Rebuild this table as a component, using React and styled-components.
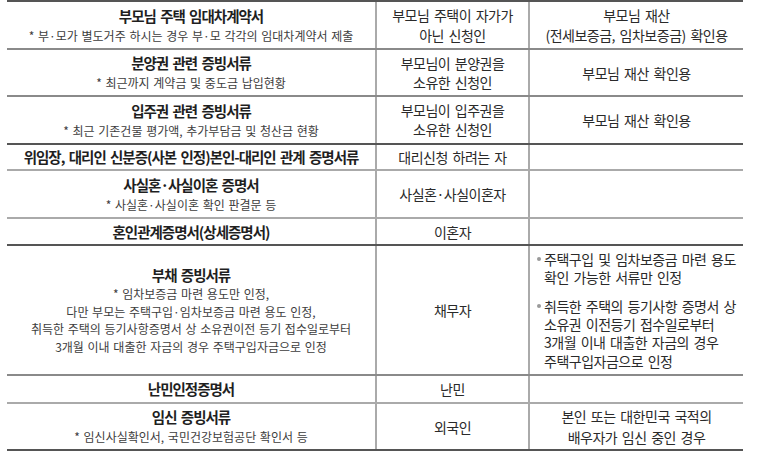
import React from "react";
import styled, { createGlobalStyle } from "styled-components";

const GlobalStyle = createGlobalStyle`
  html, body { margin: 0; padding: 0; background: #ffffff; }
  body {
    font-family: "Noto Sans CJK KR", "Noto Sans", sans-serif;
    color: #262626;
  }
`;

const LINE = { dark: "#555555", mid: "#8a8a8a", light: "#aaaaaa" };

const Table = styled.div`
  display: flex;
  flex-direction: column;
  margin-left: 7px;
  width: 736px;
`;

const Row = styled.div`
  display: grid;
  grid-template-columns: 368px 153px 215px;
  box-sizing: border-box;
  height: ${(p) => p.$h + (p.$last ? 2 : 0)}px;
  border-top: 2px solid ${(p) => LINE[p.$line]};
  border-bottom: ${(p) => (p.$last ? `2px solid ${LINE.dark}` : "none")};
`;

const Cell = styled.div`
  box-sizing: border-box;
  display: flex;
  flex-direction: column;
  align-items: ${(p) => (p.$left ? "flex-start" : "center")};
  justify-content: center;
  text-align: ${(p) => (p.$left ? "left" : "center")};
  border-left: ${(p) => (p.$divider ? `2px solid ${LINE.light}` : "none")};
  padding: ${(p) => (p.$left ? "0 0 0 7px" : "0")};
  white-space: nowrap;
  overflow: hidden;
`;

const Title = styled.div`
  font-size: 14.5px;
  font-weight: 700;
  letter-spacing: -1px;
  word-spacing: 2px;
  line-height: 20px;
  color: #1f1f1f;
`;

const Note = styled.div`
  font-size: 12px;
  letter-spacing: 0;
  word-spacing: 1px;
  line-height: ${(p) => (p.$dense ? "17.5px" : "19px")};
  color: #3d3d3d;
`;

const Body = styled.div`
  font-size: 14px;
  letter-spacing: -0.5px;
  word-spacing: 2px;
  line-height: ${(p) => p.$lh || 20}px;
  color: #2a2a2a;
`;

const BulletList = styled.div`
  display: flex;
  flex-direction: column;
  gap: 10px;
`;

const Bullet = styled.div`
  position: relative;
  padding-left: 7px;
  font-size: 14px;
  letter-spacing: -0.5px;
  word-spacing: 2px;
  line-height: 18.4px;
  color: #2a2a2a;
  &::before {
    content: "";
    position: absolute;
    left: 0;
    top: 7px;
    width: 4px;
    height: 4px;
    border-radius: 50%;
    background: #9a9a9a;
  }
`;

const rows = [
  {
    h: 48, line: "dark",
    doc: { title: "부모님 주택 임대차계약서", notes: ["* 부·모가 별도거주 하시는 경우 부·모 각각의 임대차계약서 제출"] },
    who: ["부모님 주택이 자가가", "아닌 신청인"],
    memo: ["부모님 재산", "(전세보증금, 임차보증금) 확인용"],
  },
  {
    h: 47, line: "mid",
    doc: { title: "분양권 관련 증빙서류", notes: ["* 최근까지 계약금 및 중도금 납입현황"] },
    who: ["부모님이 분양권을", "소유한 신청인"], whoLh: 19,
    memo: ["부모님 재산 확인용"],
  },
  {
    h: 48, line: "mid",
    doc: { title: "입주권 관련 증빙서류", notes: ["* 최근 기존건물 평가액, 추가부담금 및 청산금 현황"] },
    who: ["부모님이 입주권을", "소유한 신청인"], whoLh: 19,
    memo: ["부모님 재산 확인용"],
  },
  {
    h: 26, line: "dark",
    doc: { title: "위임장, 대리인 신분증(사본 인정)본인-대리인 관계 증명서류", notes: [] },
    who: ["대리신청 하려는 자"],
    memo: [],
  },
  {
    h: 48, line: "light",
    doc: { title: "사실혼·사실이혼 증명서", notes: ["* 사실혼·사실이혼 확인 판결문 등"] },
    who: ["사실혼·사실이혼자"],
    memo: [],
  },
  {
    h: 27, line: "light",
    doc: { title: "혼인관계증명서(상세증명서)", notes: [] },
    who: ["이혼자"],
    memo: [],
  },
  {
    h: 130, line: "dark", dense: true,
    doc: {
      title: "부채 증빙서류",
      notes: [
        "* 임차보증금 마련 용도만 인정,",
        "다만 부모는 주택구입·임차보증금 마련 용도 인정,",
        "취득한 주택의 등기사항증명서 상 소유권이전 등기 접수일로부터",
        "3개월 이내 대출한 자금의 경우 주택구입자금으로 인정",
      ],
    },
    who: ["채무자"],
    bullets: [
      ["주택구입 및 임차보증금 마련 용도", "확인 가능한 서류만 인정"],
      ["취득한 주택의 등기사항 증명서 상", "소유권 이전등기 접수일로부터", "3개월 이내 대출한 자금의 경우", "주택구입자금으로 인정"],
    ],
  },
  {
    h: 28, line: "mid",
    doc: { title: "난민인정증명서", notes: [] },
    who: ["난민"],
    memo: [],
  },
  {
    h: 47, line: "light", last: true,
    doc: { title: "임신 증빙서류", notes: ["* 임신사실확인서, 국민건강보험공단 확인서 등"] },
    who: ["외국인"],
    memo: ["본인 또는 대한민국 국적의", "배우자가 임신 중인 경우"], memoLh: 21,
  },
];

function Lines({ items, lh }) {
  return items.map((t, i) => (
    <Body key={i} $lh={lh}>
      {t}
    </Body>
  ));
}

export default function App() {
  return (
    <>
      <GlobalStyle />
      <Table>
        {rows.map((r, i) => (
          <Row key={i} $h={r.h} $line={r.line} $last={r.last}>
            <Cell>
              <Title>{r.doc.title}</Title>
              {r.doc.notes.map((n, j) => (
                <Note key={j} $dense={r.dense}>
                  {n}
                </Note>
              ))}
            </Cell>
            <Cell $divider>
              <Lines items={r.who} lh={r.whoLh} />
            </Cell>
            {r.bullets ? (
              <Cell $divider $left>
                <BulletList>
                  {r.bullets.map((b, j) => (
                    <Bullet key={j}>
                      {b.map((line, k) => (
                        <div key={k}>{line}</div>
                      ))}
                    </Bullet>
                  ))}
                </BulletList>
              </Cell>
            ) : (
              <Cell $divider>
                <Lines items={r.memo} lh={r.memoLh} />
              </Cell>
            )}
          </Row>
        ))}
      </Table>
    </>
  );
}
